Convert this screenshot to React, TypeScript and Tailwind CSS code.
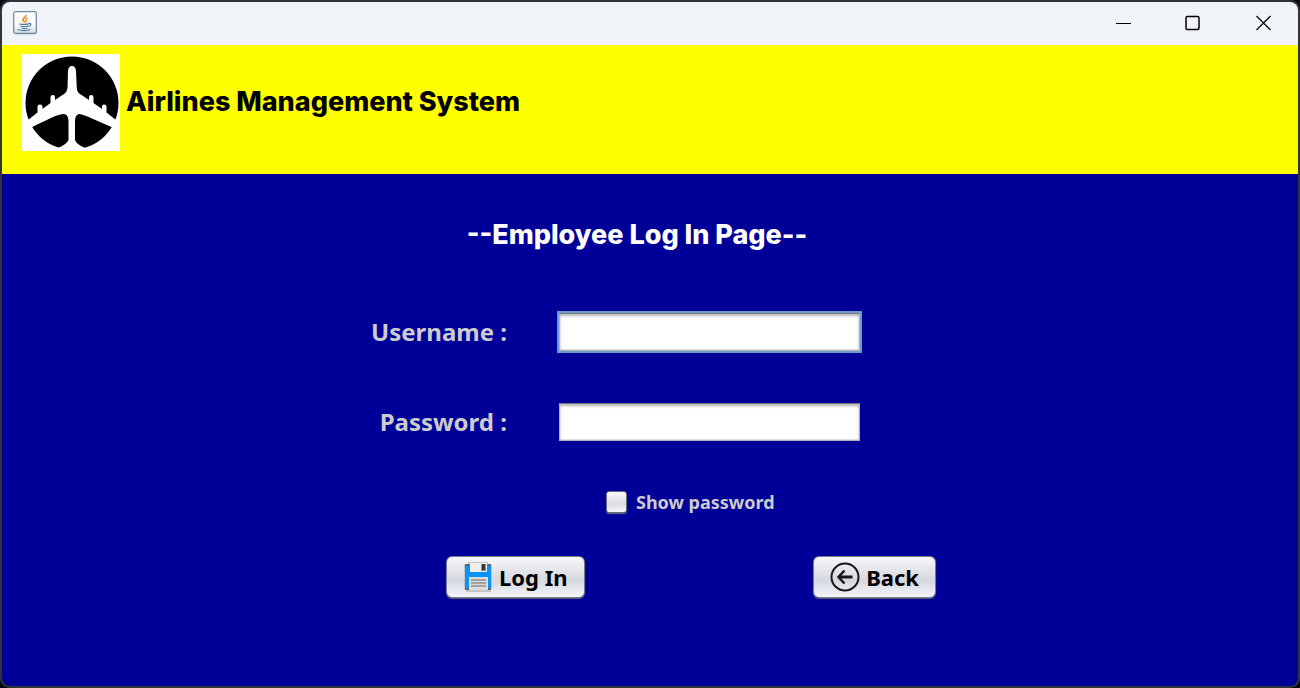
import { useState } from "react";

function JavaIcon() {
  return (
    <svg viewBox="0 0 24 24" className="h-6 w-6" aria-hidden="true">
      <defs>
        <linearGradient id="tile" x1="0" y1="0" x2="0" y2="1">
          <stop offset="0" stopColor="#ffffff" />
          <stop offset="0.6" stopColor="#f7f8f9" />
          <stop offset="1" stopColor="#d8dde2" />
        </linearGradient>
      </defs>
      <rect x="0.7" y="0.7" width="22.6" height="21.8" rx="2" fill="url(#tile)" stroke="#6e8ea6" strokeWidth="1.3" />
      <path d="M13 4c.6 2.400-3.600 3-3 5 .2.9 1.300 1.300 1.600 2.400" fill="none" stroke="#f08a2c" strokeWidth="1.800" />
      <path d="M15 7c-2.600 1-2.200 1.800-1.700 2.700.3.700 0 1.200-.6 1.700" fill="none" stroke="#f08a2c" strokeWidth="1.300" />
      <path d="M6.500 12.800c2 .8 7 .8 9 .1M7.500 15c2 .7 5.500.7 7.500 0M8.500 17c1.600.6 4.200.6 5.800 0M15.500 12.500c3.200-.8 3 2-.3 3M4.500 18.500c3.500 1.500 10 1.500 13-.2" fill="none" stroke="#4f7f9f" strokeWidth="1.300" />
    </svg>
  );
}

function PlaneLogo() {
  return (
    <svg viewBox="0 0 98 97" className="h-[97px] w-[98px] shrink-0" role="img" aria-label="Airplane">
      <rect width="98" height="97" fill="#fff" />
      <circle cx="50" cy="49" r="46.500" fill="#000" />
      <g fill="#fff">
        <path d="M50 12Q53.500 12 54 17L54.800 34Q55 38 58 40L67 46V43Q67 41 69.200 41Q71.500 41 71.500 43V49L80 55V52.500Q80 50.500 82 50.500Q84.500 50.500 84.500 52.500V58.500L94 66L98 70L89.500 73L70 64.500Q62 60.500 57 60Q53 61 53 67V86Q54 90 63 94V97H36V94Q45 90 46.500 86V67Q46 60 42 60Q37 60 30 63.500L10 73L2 70L6 66L15.500 58.500V52.500Q15.500 50.500 18 50.500Q20.500 50.500 20.500 52.500V55L28.500 49V43Q28.500 41 31 41Q33 41 33 43V46L42 40Q45 38 45.500 34L46 17Q46.500 12 50 12Z" />
      </g>
    </svg>
  );
}

function FloppyIcon() {
  return (
    <svg viewBox="0 0 30 30" className="h-[30px] w-[30px]" aria-hidden="true">
      <path d="M5 0h20v2H5zM1 3h1v24H1zM28 3h1v24h-1zM3 28h25v2H3z" fill="#c3c5c8" />
      <path d="M2 2h26v26H4l-2-2z" fill="#0a93f5" />
      <path d="M2 2h4v2H2zM25 2h3v2h-3zM2 26h4v2H2zM25 26h3v2h-3z" fill="#526778" />
      <path d="M7 1h17v9H7z" fill="#eeeeef" />
      <path d="M18 2h5v7h-5z" fill="#8a8a8a" />
      <path d="M19 2h3v6h-3z" fill="#383838" />
      <path d="M6 15h19v13H6z" fill="#dcdcdc" />
      <path d="M8 17h15v2H8zM8 20h15v2H8zM8 23h15v2H8z" fill="#a2a2a2" />
    </svg>
  );
}

function BackIcon() {
  return (
    <svg viewBox="0 0 30 30" className="h-[30px] w-[30px]" fill="none" stroke="#171717" aria-hidden="true">
      <circle cx="15" cy="15" r="13.500" strokeWidth="2" />
      <path d="M22.500 15H9" strokeWidth="3" />
      <path d="M14.500 8.500L8.500 15l6 6.500" strokeWidth="2.500" />
    </svg>
  );
}

const fieldStyle =
  "h-[38px] w-[301px] border border-[#b4b4b8] border-t-[#77777d] bg-white px-2 text-lg text-black outline-none shadow-[inset_0_2px_3px_#b5b5b5,inset_0_-1px_1px_#dddddd]";
const focusedFieldStyle =
  "h-[38px] w-[301px] border border-[#b4b4b8] border-t-[#77777d] bg-white px-2 text-lg text-black outline-2 outline-[#6a9bcb] shadow-[inset_0_2px_3px_#b5b5b5,inset_0_-1px_1px_#dddddd]";
const buttonStyle =
  "flex h-[42px] items-center gap-[6px] rounded-[6px] border border-[#777b85] bg-linear-to-b from-[#f6f7f9] via-[#d5d8df] via-60% to-[#f4f6fb] px-4 text-[22px] font-bold text-black shadow-[0_1px_1px_#5b5f78]";

export default function App() {
  const [showPassword, setShowPassword] = useState(false);

  return (
    <div className="flex min-h-screen bg-[#07090d] font-['Noto_Sans',sans-serif]">
      <div className="flex flex-1 flex-col overflow-hidden rounded-[10px] border-2 border-[#333438] bg-[#000099]">
        <div className="flex h-[43px] items-center justify-between bg-[#f0f3f8] pb-[2px] pl-[11px]">
          <JavaIcon />
          <div className="flex h-full">
            <button type="button" aria-label="Minimize" className="flex w-[70px] items-center justify-center">
              <svg viewBox="0 0 16 16" className="h-4 w-4" aria-hidden="true">
                <path d="M1 8.500h15" stroke="#000" />
              </svg>
            </button>
            <button type="button" aria-label="Maximize" className="flex w-[70px] items-center justify-center">
              <svg viewBox="0 0 16 16" className="h-4 w-4" fill="none" aria-hidden="true">
                <rect x="1" y="1.500" width="13" height="13" rx="1.500" stroke="#000" strokeWidth="1.500" />
              </svg>
            </button>
            <button type="button" aria-label="Close" className="flex w-[70px] items-center justify-center">
              <svg viewBox="0 0 16 16" className="h-4 w-4" aria-hidden="true">
                <path d="M1.500 1l14 14M15.500 1L1.500 15" stroke="#111" strokeWidth="1.400" />
              </svg>
            </button>
          </div>
        </div>

        <header className="flex h-[129px] items-start gap-[6px] bg-[#ffff00] pt-[9px] pl-5">
          <PlaneLogo />
          <h1 className="flex h-[97px] items-center font-['Inter',sans-serif] text-[27px] font-extrabold text-black">
            Airlines Management System
          </h1>
        </header>

        <main className="mx-auto w-[572px] max-w-full pt-[45px] pb-10">
          <h2 className="pr-[26px] text-center font-['Inter',sans-serif] text-[27px] leading-8 font-extrabold text-white">
            --Employee Log In Page--
          </h2>
          <form className="pt-[62px]" onSubmit={(e) => e.preventDefault()}>
            <div className="grid grid-cols-[143px_301px] items-center gap-x-[52px] gap-y-[52px]">
              <label htmlFor="username" className="text-right text-2xl font-bold text-[#cccccc]">
                Username :
              </label>
              <input id="username" type="text" className={focusedFieldStyle} />
              <label htmlFor="password" className="text-right text-2xl font-bold text-[#cccccc]">
                Password :
              </label>
              <input id="password" type={showPassword ? "text" : "password"} className={fieldStyle} />
            </div>
            <div className="mt-[50px] flex h-[22px] items-center gap-[9px] pl-[242px]">
              <input
                id="show-password"
                type="checkbox"
                checked={showPassword}
                onChange={(e) => setShowPassword(e.target.checked)}
                className="h-[22px] w-[21px] appearance-none rounded-[3px] border border-[#666a72] bg-linear-to-b from-[#fafafa] via-[#dcdde2] via-60% to-[#f5f6fa] shadow-[0_1px_1px_#666a80] checked:bg-[#7a9fc8] checked:bg-none"
              />
              <label htmlFor="show-password" className="text-lg font-bold text-[#cccccc]">
                Show password
              </label>
            </div>
            <div className="flex justify-between pt-[43px] pl-[82px]">
              <button type="submit" className={buttonStyle}>
                <FloppyIcon />
                Log In
              </button>
              <button type="button" className={buttonStyle}>
                <BackIcon />
                Back
              </button>
            </div>
          </form>
        </main>
      </div>
    </div>
  );
}
